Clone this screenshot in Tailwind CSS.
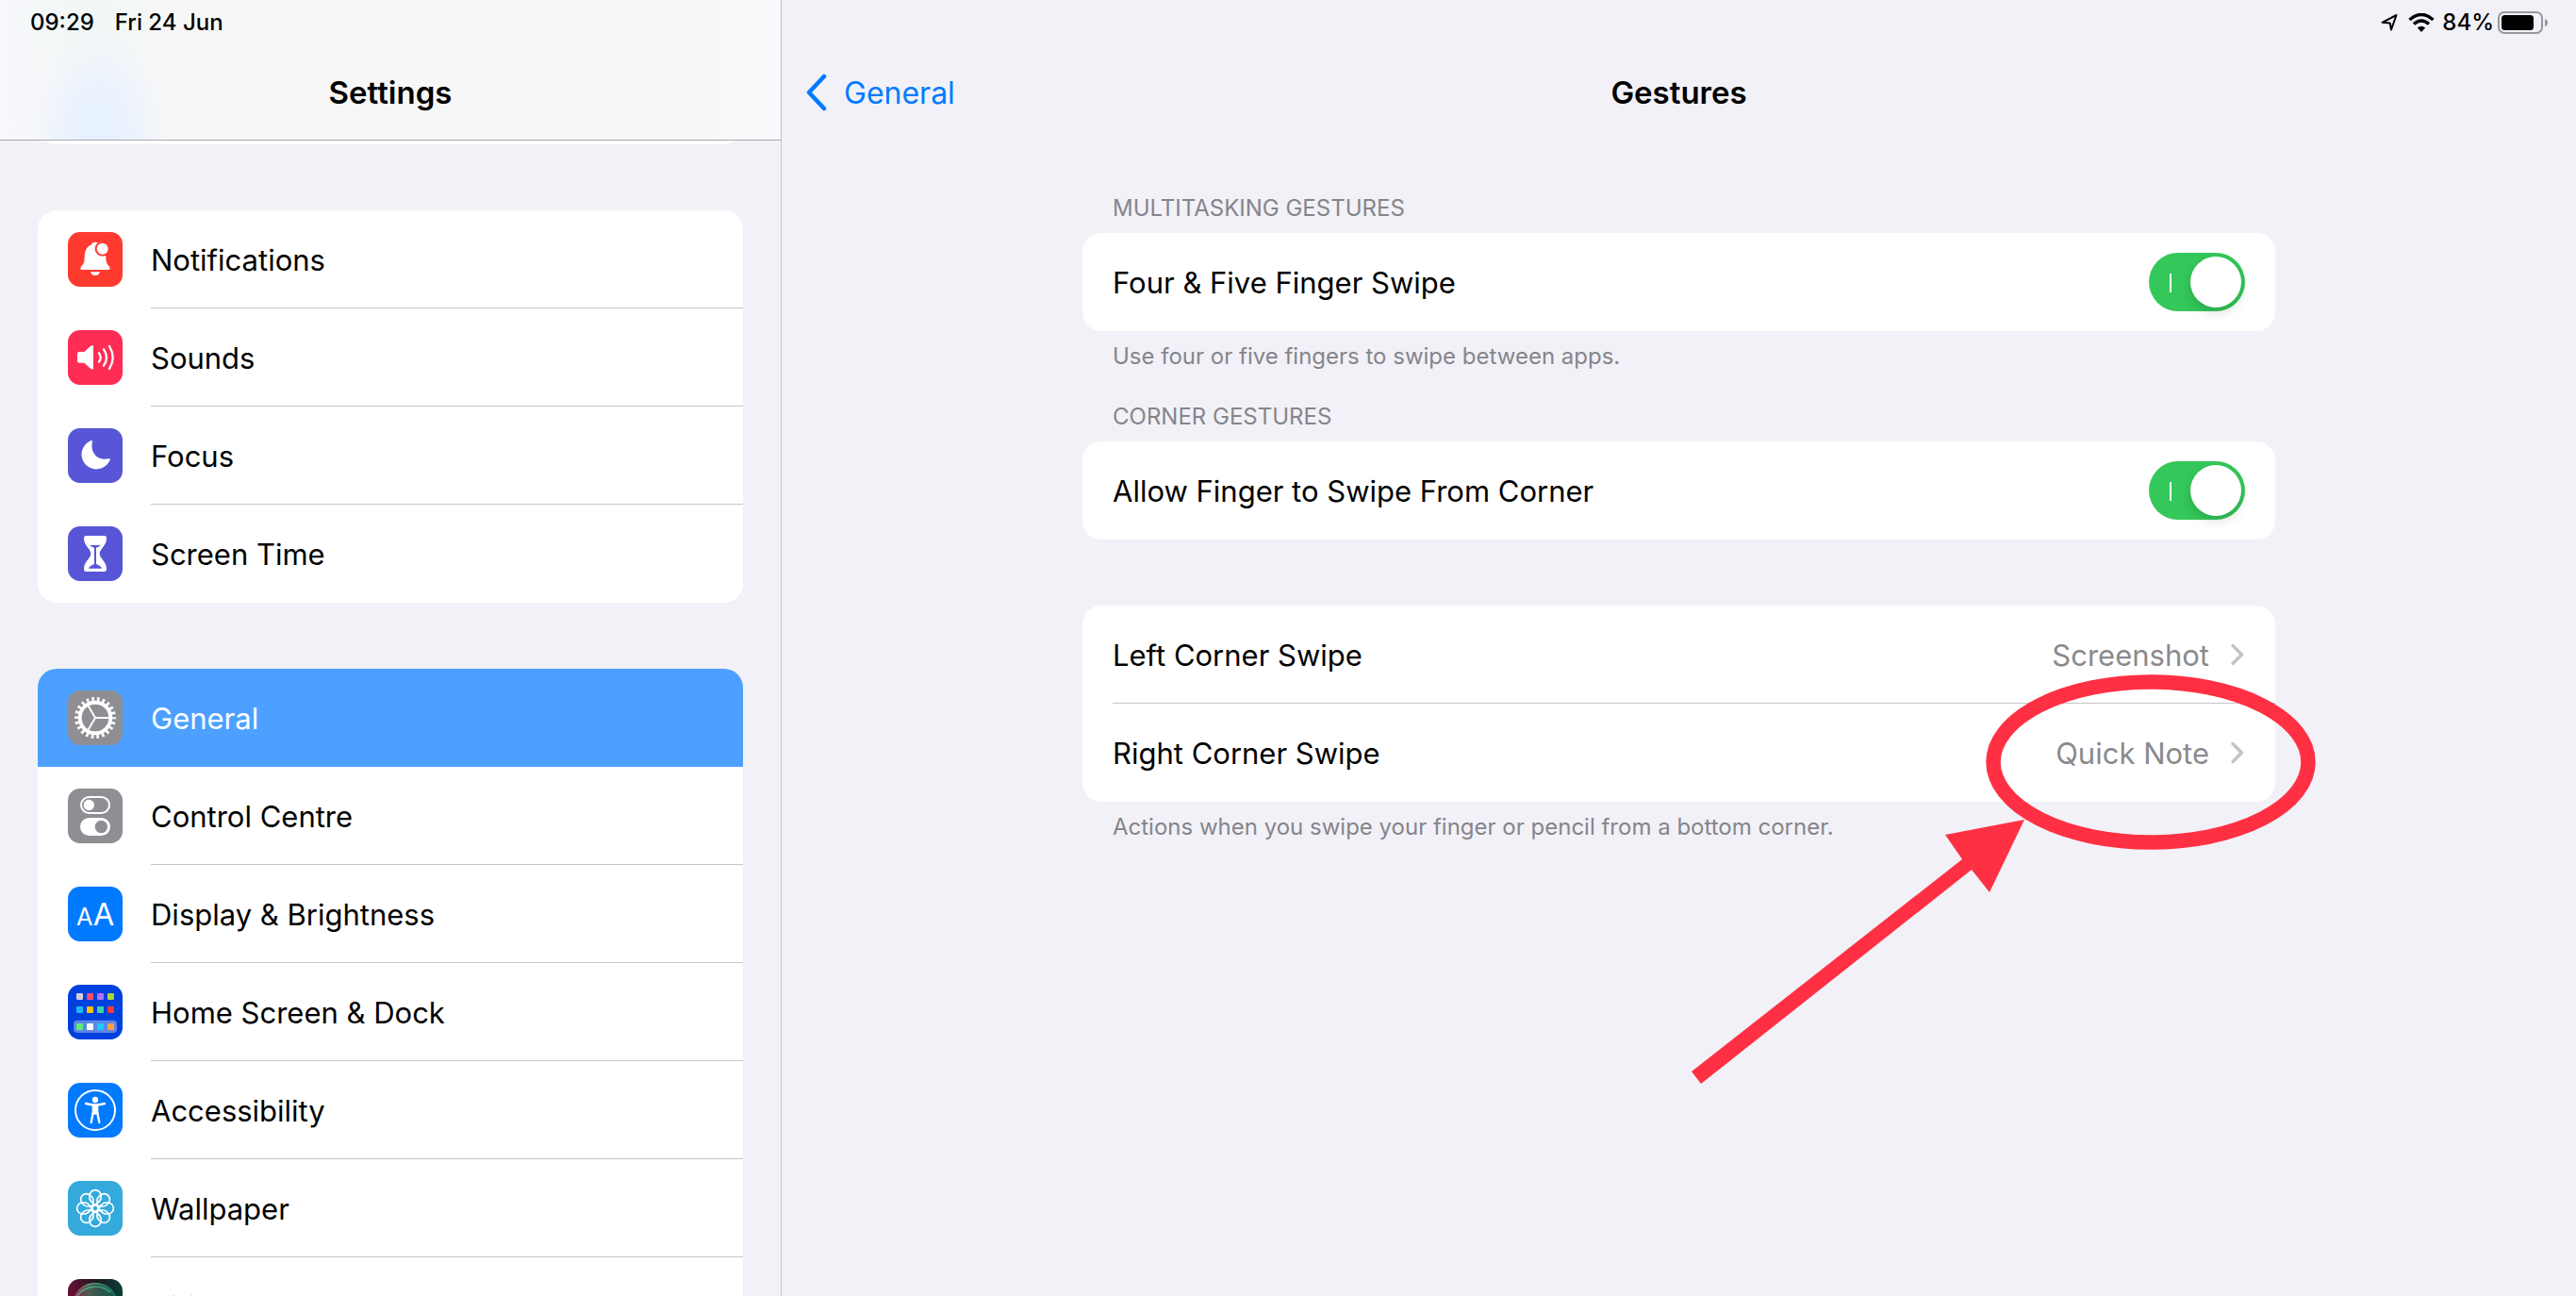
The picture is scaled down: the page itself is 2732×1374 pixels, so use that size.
<!DOCTYPE html>
<html lang="en-GB">
<head>
<meta charset="utf-8">
<meta name="viewport" content="width=device-width, initial-scale=1">
<title>Settings – Gestures</title>
<script src="https://cdn.jsdelivr.net/npm/@tailwindcss/browser@4"></script>
</head>
<body class="flex h-screen overflow-hidden bg-[#f2f1f7] font-['Inter','Liberation_Sans',sans-serif] text-[31px] leading-10 text-black">

<!-- Sidebar -->
<aside class="flex w-[829px] shrink-0 flex-col overflow-hidden border-r border-[#c3c3c8]">
  <header class="relative z-10 shrink-0 border-b border-[#a9a9ae] bg-[#f7f7f7] bg-[radial-gradient(ellipse_76px_120px_at_104px_148px,#e8f1ff_30%,transparent),radial-gradient(ellipse_90px_60px_at_90px_20px,#f0f8f6,transparent),linear-gradient(90deg,#f8f8fd,transparent_80px,transparent_750px,#fafafc_800px)]">
    <div class="flex h-12 items-center gap-[22px] px-8 text-2xl font-medium">
      <time>09:29</time><span>Fri 24 Jun</span>
    </div>
    <h1 class="flex h-[100px] items-center justify-center text-[33px] font-semibold">Settings</h1>
  </header>

  <nav aria-label="Settings" class="flex flex-col gap-[70px] px-10">
    <div class="-mt-[100px] h-[104px] shrink-0 rounded-[20px] bg-white"></div>

    <ul class="shrink-0 overflow-hidden rounded-[20px] bg-white">
      <li><a href="#notifications" class="flex h-[104px] items-center gap-[30px] pl-8">
        <svg class="size-[58px] shrink-0" viewBox="0 0 174 174" aria-hidden="true"><rect width="174" height="174" rx="38" fill="#ff3b30"/><path fill="#fff" d="M45 120Q39 120 40 114Q41 110 47 104Q53 98 53 84C53 60 58 47 74 41Q76 32 87 32Q98 32 100 41C116 47 121 60 121 84Q121 98 127 104Q133 110 134 114Q135 120 129 120ZM72 127H102Q99 138 87 138T72 127Z"/><circle cx="110" cy="53" r="24" fill="#ff3b30"/><circle cx="110" cy="53" r="18" fill="#fff"/></svg>
        <span class="flex flex-1 items-center self-stretch border-b border-[#c6c6c8] pt-0.5">Notifications</span></a></li>
      <li><a href="#sounds" class="flex h-[104px] items-center gap-[30px] pl-8">
        <svg class="size-[58px] shrink-0" viewBox="0 0 174 174" aria-hidden="true"><rect width="174" height="174" rx="38" fill="#ff2d55"/><path fill="#fff" d="M36 69H52L73 50Q81 45 81 53V120Q81 128 73 123L52 104H36Q30 104 30 98V75Q30 69 36 69Z"/><path fill="none" stroke="#fff" stroke-width="7" stroke-linecap="round" d="M99 73Q109 87 99 101M114 61Q132 87 114 113M132 51Q154 87 132 123"/></svg>
        <span class="flex flex-1 items-center self-stretch border-b border-[#c6c6c8] pt-0.5">Sounds</span></a></li>
      <li><a href="#focus" class="flex h-[104px] items-center gap-[30px] pl-8">
        <svg class="size-[58px] shrink-0" viewBox="0 0 174 174" aria-hidden="true"><rect width="174" height="174" rx="38" fill="#5856d6"/><path fill="#fff" d="M72 40Q78 37 78 42C70 75 92 105 130 97Q136 96 134 101A47 47 0 1 1 72 40Z"/></svg>
        <span class="flex flex-1 items-center self-stretch border-b border-[#c6c6c8] pt-0.5">Focus</span></a></li>
      <li><a href="#screen-time" class="flex h-[104px] items-center gap-[30px] pl-8">
        <svg class="size-[58px] shrink-0" viewBox="0 0 174 174" aria-hidden="true"><rect width="174" height="174" rx="38" fill="#5856d6"/><path fill="#fff" d="M58 30H116Q123 30 123 38C123 62 101 72 101 87S123 112 123 136Q123 144 116 144H58Q51 144 51 136C51 112 73 102 73 87S51 62 51 38Q51 30 58 30Z"/><path fill="#5856d6" d="M70 60H104Q101 65 90 68V120Q105 126 108 134H66Q69 126 84 120V68Q73 65 70 60Z"/></svg>
        <span class="flex flex-1 items-center self-stretch pt-0.5">Screen Time</span></a></li>
    </ul>

    <ul class="shrink-0 overflow-hidden rounded-[20px] bg-white">
      <li><a href="#general" aria-current="page" class="flex h-[104px] items-center gap-[30px] bg-[#4da0ff] pl-8 text-white">
        <svg class="size-[58px] shrink-0" viewBox="0 0 174 174" aria-hidden="true"><rect width="174" height="174" rx="38" fill="#8e8e93"/><g fill="none" stroke="#fff"><circle cx="87" cy="87" r="49" stroke-width="12"/><circle cx="87" cy="87" r="59" stroke-width="14" pathLength="220" stroke-dasharray="4.6 5.4" stroke-dashoffset="2.3"/><path stroke-width="6" d="M87 87H134M87 87L63 46M87 87L63 128"/></g></svg>
        <span class="flex flex-1 items-center self-stretch pt-0.5">General</span></a></li>
      <li><a href="#control-centre" class="flex h-[104px] items-center gap-[30px] pl-8">
        <svg class="size-[58px] shrink-0" viewBox="0 0 174 174" aria-hidden="true"><rect width="174" height="174" rx="38" fill="#8e8e93"/><rect x="42" y="27" width="90" height="51" rx="25.5" fill="none" stroke="#fff" stroke-width="6"/><circle cx="67" cy="52.500" r="17" fill="#fff"/><rect x="39" y="93" width="96" height="57" rx="28.500" fill="#fff"/><circle cx="106" cy="121.500" r="20" fill="#8e8e93"/></svg>
        <span class="flex flex-1 items-center self-stretch border-b border-[#c6c6c8] pt-0.5">Control Centre</span></a></li>
      <li><a href="#display" class="flex h-[104px] items-center gap-[30px] pl-8">
        <svg class="size-[58px] shrink-0" viewBox="0 0 174 174" aria-hidden="true"><rect width="174" height="174" rx="38" fill="#007aff"/><g fill="#fff" text-anchor="middle"><text x="53" y="123" font-size="76">A</text><text x="114" y="123" font-size="98">A</text></g></svg>
        <span class="flex flex-1 items-center self-stretch border-b border-[#c6c6c8] pt-0.5">Display &amp; Brightness</span></a></li>
      <li><a href="#home-screen" class="flex h-[104px] items-center gap-[30px] pl-8">
        <svg class="size-[58px] shrink-0" viewBox="0 0 174 174" aria-hidden="true"><rect width="174" height="174" rx="38" fill="#0040dd"/><rect x="18" y="113" width="138" height="40" rx="12" fill="#fff" fill-opacity=".36"/><rect x="27" y="27" width="21" height="21" rx="3" fill="#d1d1d6"/><rect x="60" y="27" width="21" height="21" rx="3" fill="#ff4f6a"/><rect x="93" y="27" width="21" height="21" rx="3" fill="#b473ff"/><rect x="126" y="27" width="21" height="21" rx="3" fill="#aad636"/><rect x="27" y="69" width="21" height="21" rx="3" fill="#1ab8ff"/><rect x="60" y="69" width="21" height="21" rx="3" fill="#ffc107"/><rect x="93" y="69" width="21" height="21" rx="3" fill="#3bd6a4"/><rect x="126" y="69" width="21" height="21" rx="3" fill="#ff3b30"/><rect x="27" y="123" width="21" height="21" rx="3" fill="#5cf07a"/><rect x="60" y="123" width="21" height="21" rx="3" fill="#fff"/><rect x="93" y="123" width="21" height="21" rx="3" fill="#1acbff"/><rect x="126" y="123" width="21" height="21" rx="3" fill="#ff9f45"/></svg>
        <span class="flex flex-1 items-center self-stretch border-b border-[#c6c6c8] pt-0.5">Home Screen &amp; Dock</span></a></li>
      <li><a href="#accessibility" class="flex h-[104px] items-center gap-[30px] pl-8">
        <svg class="size-[58px] shrink-0" viewBox="0 0 174 174" aria-hidden="true"><rect width="174" height="174" rx="38" fill="#007aff"/><circle cx="87" cy="87" r="63" fill="none" stroke="#fff" stroke-width="6"/><circle cx="87" cy="54" r="9.500" fill="#fff"/><path d="M57 66Q87 74 117 66M80 96L74 126M94 96L100 126" fill="none" stroke="#fff" stroke-width="7" stroke-linecap="round"/><path fill="#fff" d="M73 68H101L97 76V101H77V76Z"/><path fill="#007aff" d="M87 99L92 112H82Z"/></svg>
        <span class="flex flex-1 items-center self-stretch border-b border-[#c6c6c8] pt-0.5">Accessibility</span></a></li>
      <li><a href="#wallpaper" class="flex h-[104px] items-center gap-[30px] pl-8">
        <svg class="size-[58px] shrink-0" viewBox="0 0 174 174" aria-hidden="true"><defs><path id="petal" d="M87 77C82 69 69 68 69 54V47A18 18 0 0 1 105 47V54C105 68 92 69 87 77Z"/></defs><rect width="174" height="174" rx="38" fill="#34aadc"/><g fill="none" stroke="#fff" stroke-width="5"><use href="#petal"/><use href="#petal" transform="rotate(45 87 87)"/><use href="#petal" transform="rotate(90 87 87)"/><use href="#petal" transform="rotate(135 87 87)"/><use href="#petal" transform="rotate(180 87 87)"/><use href="#petal" transform="rotate(225 87 87)"/><use href="#petal" transform="rotate(270 87 87)"/><use href="#petal" transform="rotate(315 87 87)"/><circle cx="87" cy="87" r="10"/></g></svg>
        <span class="flex flex-1 items-center self-stretch border-b border-[#c6c6c8] pt-0.5">Wallpaper</span></a></li>
      <li><a href="#siri" class="flex h-[104px] items-center gap-[30px] pl-8">
        <svg class="size-[58px] shrink-0" viewBox="0 0 174 174" aria-hidden="true"><defs><linearGradient id="siri-bg"><stop offset="0" stop-color="#6b0f35"/><stop offset=".5" stop-color="#1c1a1e"/><stop offset="1" stop-color="#0b3f38"/></linearGradient><linearGradient id="siri-orb"><stop offset="0" stop-color="#a8234f"/><stop offset=".35" stop-color="#5d8a72"/><stop offset="1" stop-color="#0f6a55"/></linearGradient></defs><rect width="174" height="174" rx="38" fill="url(#siri-bg)"/><circle cx="87" cy="84" r="70" fill="url(#siri-orb)" fill-opacity=".6" stroke="url(#siri-orb)" stroke-width="6"/><path d="M24 66C42 24 96 10 136 42" fill="none" stroke="#4fd0a4" stroke-opacity=".7" stroke-width="4"/></svg>
        <span class="flex flex-1 items-center self-stretch pt-0.5">Siri &amp; Search</span></a></li>
    </ul>
  </nav>
</aside>

<!-- Detail pane -->
<main class="flex min-w-0 flex-1 flex-col">
  <div class="flex h-12 shrink-0 items-center justify-end pr-[30px] text-2xl font-medium">
    <svg class="mr-[11px] h-5 w-[18px]" viewBox="0 0 18 20" aria-label="Location"><path d="M1.500 9.800L16.500 2L11 17.500L9.800 10.600Z" fill="none" stroke="#000" stroke-width="2" stroke-linejoin="round"/></svg>
    <svg class="mr-2 h-5 w-7" viewBox="0 0 28 20" aria-label="Wi-Fi"><path d="M1.500 7Q14-4 26.500 7M6 11.500Q14 4.500 22 11.500" fill="none" stroke="#000" stroke-width="3.600"/><path d="M9.800 15.400Q14 12 18.200 15.400L14 20Z"/></svg>
    <span class="mr-1">84%</span>
    <svg class="h-6 w-[53px]" viewBox="0 0 53 24" aria-label="Battery"><rect x="1" y="1" width="46" height="22" rx="6" fill="none" stroke="#98979d" stroke-width="2"/><rect x="4" y="4" width="34" height="16" rx="3.500"/><path d="M50 8Q53 9 53 12T50 16Z" fill="#98979d"/></svg>
  </div>
  <div class="grid h-[100px] shrink-0 grid-cols-[1fr_auto_1fr] items-center">
    <a href="#general" class="flex items-center gap-[18px] pl-[25px] text-[32px] text-[#007aff]">
      <svg class="h-10 w-[23px]" viewBox="0 0 23 40" fill="none" stroke="currentColor" stroke-width="4.500" stroke-linecap="round" stroke-linejoin="round" aria-hidden="true"><path d="M20 3L4 20L20 37"/></svg>
      <span class="pt-0.5">General</span></a>
    <h2 class="text-[33px] font-semibold">Gestures</h2>
  </div>

  <div class="mx-auto w-full max-w-[1265px]">
    <h3 class="mt-[57px] px-8 text-2xl leading-8 text-[#85858b]">MULTITASKING GESTURES</h3>
    <label class="mt-2.5 flex h-[104px] items-center justify-between rounded-[20px] bg-white px-8">
      <span class="pt-0.5">Four &amp; Five Finger Swipe</span>
      <input type="checkbox" role="switch" checked class="relative h-[62px] w-[102px] shrink-0 appearance-none rounded-full bg-[#e9e9ea] before:absolute before:top-[22px] before:left-[22px] before:h-5 before:w-0.5 before:bg-white after:absolute after:top-1 after:left-1 after:size-[54px] after:rounded-full after:bg-white after:shadow-[0_5px_12px_rgba(0,0,0,0.15)] checked:bg-[#34c759] checked:after:left-11">
    </label>
    <p class="mt-[11px] px-8 text-2xl leading-8 text-[#85858b]">Use four or five fingers to swipe between apps.</p>

    <h3 class="mt-8 px-8 text-2xl leading-8 text-[#85858b]">CORNER GESTURES</h3>
    <label class="mt-2.5 flex h-[104px] items-center justify-between rounded-[20px] bg-white px-8">
      <span class="pt-0.5">Allow Finger to Swipe From Corner</span>
      <input type="checkbox" role="switch" checked class="relative h-[62px] w-[102px] shrink-0 appearance-none rounded-full bg-[#e9e9ea] before:absolute before:top-[22px] before:left-[22px] before:h-5 before:w-0.5 before:bg-white after:absolute after:top-1 after:left-1 after:size-[54px] after:rounded-full after:bg-white after:shadow-[0_5px_12px_rgba(0,0,0,0.15)] checked:bg-[#34c759] checked:after:left-11">
    </label>

    <div class="relative mt-[70px]">
      <ul class="rounded-[20px] bg-white pl-8">
        <li><a href="#left-corner" class="flex h-[104px] items-center border-b border-[#c6c6c8] pr-8">
          <span class="flex-1 pt-0.5">Left Corner Swipe</span><span class="pt-0.5 text-[#8a8a8e]">Screenshot</span>
          <svg class="ml-[22px] h-6 w-4" viewBox="0 0 16 24" fill="none" stroke="#c4c4c7" stroke-width="3.500" stroke-linecap="round" stroke-linejoin="round" aria-hidden="true"><path d="M3 2.500L12.500 12L3 21.500"/></svg></a></li>
        <li><a href="#right-corner" class="flex h-[104px] items-center pr-8">
          <span class="flex-1 pt-0.5">Right Corner Swipe</span><span class="pt-0.5 text-[#8a8a8e]">Quick Note</span>
          <svg class="ml-[22px] h-6 w-4" viewBox="0 0 16 24" fill="none" stroke="#c4c4c7" stroke-width="3.500" stroke-linecap="round" stroke-linejoin="round" aria-hidden="true"><path d="M3 2.500L12.500 12L3 21.500"/></svg></a></li>
      </ul>
      <!-- Callout: ring round the Quick Note value, with an arrow to it -->
      <svg class="pointer-events-none absolute top-[68px] -right-[47px] h-[442px] w-[670px]" viewBox="1790 710 670 442" aria-hidden="true"><ellipse cx="2281" cy="808" rx="167" ry="85" fill="none" stroke="#ff3043" stroke-width="15.500"/><path fill="#ff3043" d="M1794 1136L2081 911L2063 885L2147 869L2110 946L2091 922L1804 1149Z"/></svg>
    </div>
    <p class="mt-[11px] px-8 text-2xl leading-8 text-[#85858b]">Actions when you swipe your finger or pencil from a bottom corner.</p>
  </div>
</main>
</body>
</html>
